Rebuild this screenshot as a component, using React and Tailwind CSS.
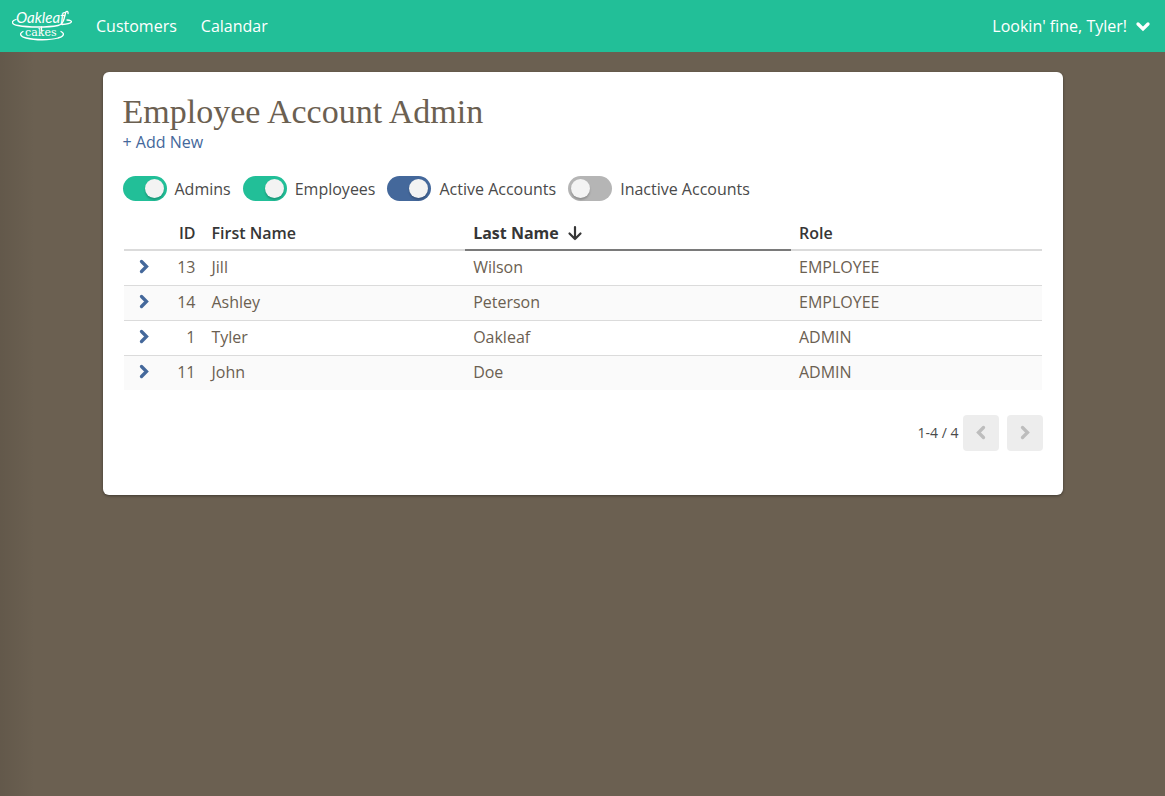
import React, { useState } from "react";

const LINK = "text-[#44689b]";

function Logo() {
  return (
    <svg width="60" height="34" viewBox="0 0 60 34" role="img" aria-label="Oakleaf Cakes" fill="none" stroke="#fff" strokeLinecap="round">
      <text x="4" y="14" fill="#fff" stroke="none" fontFamily="Lato, sans-serif" fontStyle="italic" fontSize="15">
        Oakleaf
      </text>
      <path d="M4 10.500C-1 12 -1 15.500 6 16.500C16 18.500 36 18.500 46 16.500C51 15.500 52 11 53.500 4C54 1.500 56.500 2 56 4.500M55 11C62 11.500 61 14.500 50 15.500" strokeWidth="1.300" />
      <path d="M29.500 18V22" strokeWidth="1.300" />
      <text x="13" y="27" fill="#fff" stroke="none" fontFamily="'DejaVu Serif', serif" fontSize="11">
        cakes
      </text>
      <path d="M11 22.500C7 24.500 8 27.500 14 29C23 31.300 38 31.300 46 29C52 27.500 53 24.500 49 22.500" strokeWidth="1.300" />
    </svg>
  );
}

function Chevron({ className, d }) {
  return (
    <svg width="16" height="16" viewBox="0 0 16 16" className={className} fill="none" stroke="currentColor" strokeWidth="3.300" strokeLinejoin="miter" strokeLinecap="round" aria-hidden="true">
      <path d={d} />
    </svg>
  );
}

const RIGHT = "M5.500 2.500L10.500 7.500L5.500 12.500";
const LEFT = "M10.500 2.500L5.500 7.500L10.500 12.500";
const DOWN = "M3 6L8 11L13 6";

function Toggle({ label, on, color }) {
  const [checked, setChecked] = useState(on);
  return (
    <label className="flex cursor-pointer items-center gap-2 text-[#4a4a4a]">
      <input
        type="checkbox"
        checked={checked}
        onChange={() => setChecked(!checked)}
        className={`h-[25px] w-11 shrink-0 cursor-pointer appearance-none rounded-full bg-[#b5b5b5] p-[3px] before:block before:size-[19px] before:rounded-full before:bg-[#f3f3f3] before:shadow-[0_2px_2px_rgba(0,0,0,0.2)] checked:before:ml-[19px] ${color}`}
      />
      <span>{label}</span>
    </label>
  );
}

const toggles = [
  { label: "Admins", on: true, color: "checked:bg-[#22bf98]" },
  { label: "Employees", on: true, color: "checked:bg-[#22bf98]" },
  { label: "Active Accounts", on: true, color: "checked:bg-[#44689b]" },
  { label: "Inactive Accounts", on: false, color: "checked:bg-[#44689b]" },
];

const employees = [
  { id: 13, first: "Jill", last: "Wilson", role: "EMPLOYEE" },
  { id: 14, first: "Ashley", last: "Peterson", role: "EMPLOYEE" },
  { id: 1, first: "Tyler", last: "Oakleaf", role: "ADMIN" },
  { id: 11, first: "John", last: "Doe", role: "ADMIN" },
];

export default function App() {
  return (
    <div className="min-h-screen bg-[#6b6051] bg-linear-to-r from-black/8 to-transparent to-3% font-['Open_Sans',sans-serif] text-base text-[#6b6051]">
      <header className="flex h-[52px] items-center bg-[#22bf98] px-3 text-white">
        <a href="#home" className="mr-6 shrink-0">
          <Logo />
        </a>
        <nav className="flex gap-6">
          <a href="#customers">Customers</a>
          <a href="#calendar">Calandar</a>
        </nav>
        <button type="button" className="ml-auto flex items-center gap-2">
          Lookin' fine, Tyler!
          <Chevron d={DOWN} className="mr-0.5" />
        </button>
      </header>

      <main className="mx-auto mt-5 max-w-[960px] rounded-md bg-white px-5 pt-5 pb-11 shadow-[0_1px_3px_rgba(0,0,0,0.4)]">
        <h1 className="font-['Liberation_Serif',serif] text-[34px] leading-10">Employee Account Admin</h1>
        <a href="#new" className={`block leading-5 ${LINK}`}>
          + Add New
        </a>

        <div className="mt-6 flex flex-wrap gap-3">
          {toggles.map((t) => (
            <Toggle key={t.label} {...t} />
          ))}
        </div>

        <div className="mt-4 px-px">
          <table className="w-full table-fixed border-separate border-spacing-0 text-left">
            <colgroup>
              <col className="w-10" />
              <col className="w-10" />
              <col className="w-[28.5%]" />
              <col className="w-[35.5%]" />
              <col />
            </colgroup>
            <thead className="text-[#363636]">
              <tr className="h-[34px]">
                <th className="border-b-2 border-[#dbdbdb]" aria-label="Expand" />
                <th className="border-b-2 border-[#dbdbdb] pr-2 text-right font-semibold">ID</th>
                <th className="border-b-2 border-[#dbdbdb] px-2 font-semibold">First Name</th>
                <th className="border-b-2 border-[#7a7a7a] px-2 font-bold" aria-sort="descending">
                  <button type="button" className="flex items-center gap-2">
                    Last Name
                    <svg width="16" height="16" viewBox="0 0 16 16" fill="none" stroke="currentColor" strokeWidth="2.200" strokeLinecap="round" strokeLinejoin="round" aria-hidden="true">
                      <path d="M8 2V14M2.500 8.500L8 14L13.500 8.500" />
                    </svg>
                  </button>
                </th>
                <th className="border-b-2 border-[#dbdbdb] px-2 font-semibold">Role</th>
              </tr>
            </thead>
            <tbody className="[&>tr:nth-child(even)]:bg-[#fafafa] [&>tr:not(:last-child)>td]:border-b [&>tr>td]:border-[#dbdbdb] [&>tr>td]:pb-0.5">
              {employees.map((e) => (
                <tr key={e.id} className="h-[35px] last:h-[34px]">
                  <td>
                    <button type="button" aria-label={`Show details for ${e.first} ${e.last}`} className={`mx-auto block ${LINK}`}>
                      <Chevron d={RIGHT} />
                    </button>
                  </td>
                  <td className="pr-2 text-right">{e.id}</td>
                  <td className="px-2">{e.first}</td>
                  <td className="px-2">{e.last}</td>
                  <td className="px-2">{e.role}</td>
                </tr>
              ))}
            </tbody>
          </table>
        </div>

        <div className="mt-[25px] flex items-center justify-end">
          <span className="mr-1 text-sm text-[#4a4a4a]">1-4 / 4</span>
          <button type="button" disabled aria-label="Previous page" className="mr-2 flex size-9 items-center justify-center rounded bg-[#ededed] text-[#bdbdbd]">
            <Chevron d={LEFT} />
          </button>
          <button type="button" disabled aria-label="Next page" className="flex size-9 items-center justify-center rounded bg-[#ededed] text-[#bdbdbd]">
            <Chevron d={RIGHT} />
          </button>
        </div>
      </main>
    </div>
  );
}
